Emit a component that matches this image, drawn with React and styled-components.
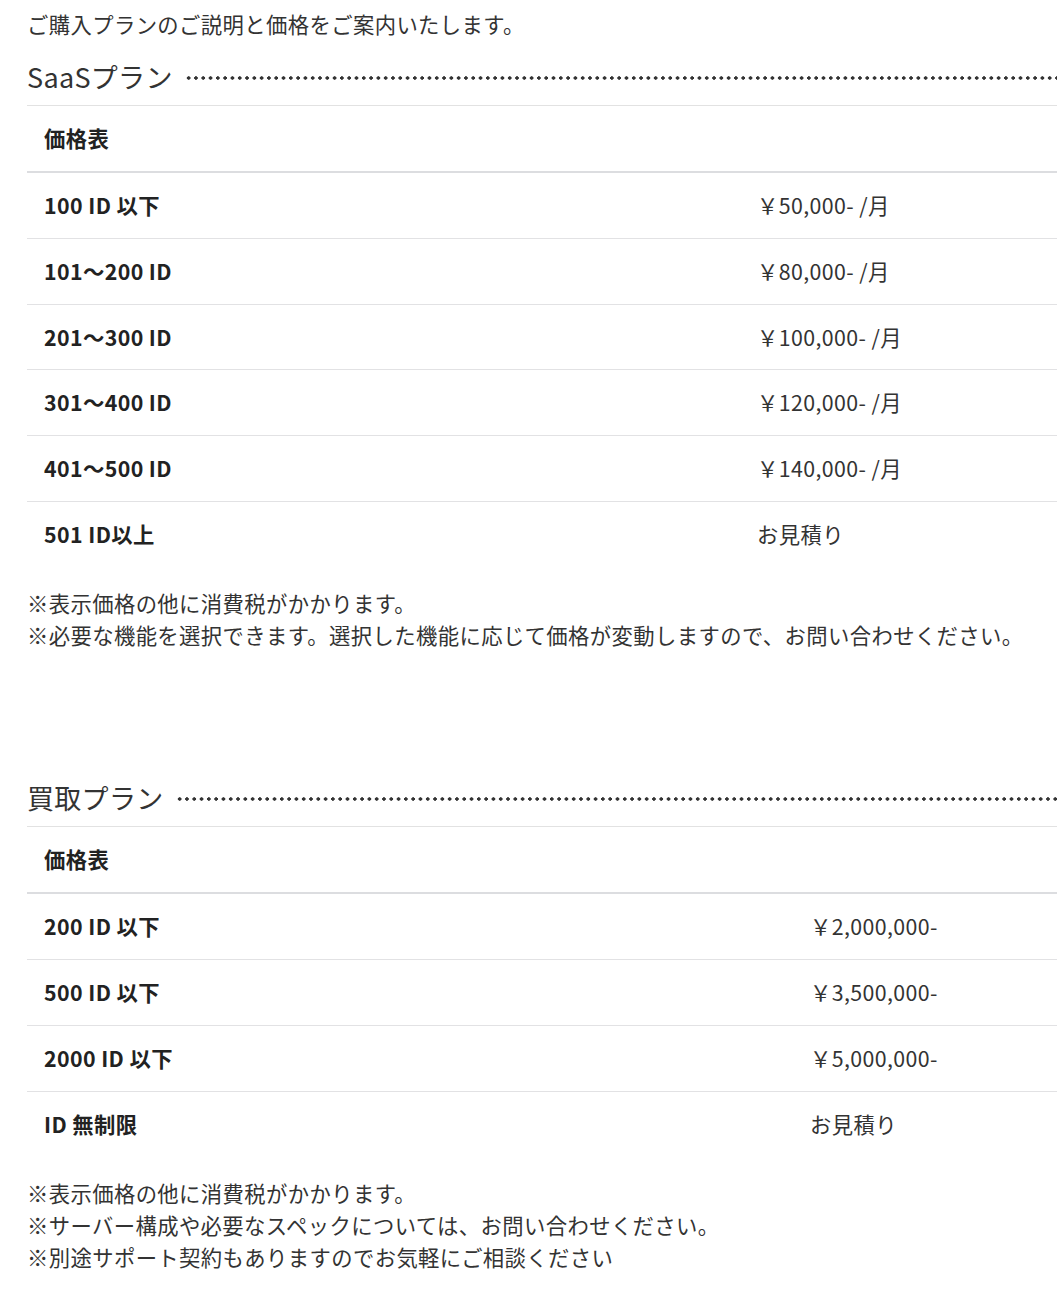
import React from "react";
import styled, { createGlobalStyle } from "styled-components";

const Global = createGlobalStyle`
  html, body { margin: 0; padding: 0; background: #fff; overflow: hidden; }
  body {
    font-family: "Noto Sans CJK JP", "Noto Sans", sans-serif;
    color: #333;
    letter-spacing: 0.4px;
  }
`;

const Page = styled.div`
  padding: 8px 0 40px 27px;
`;

const Lead = styled.p`
  margin: 0;
  font-size: 21.33px;
  line-height: 32px;
`;

const Section = styled.section`
  margin-top: ${(p) => p.$top}px;
`;

const Heading = styled.h2`
  display: flex;
  align-items: center;
  gap: 12px;
  margin: 0 0 8px;
  font-size: 27px;
  font-weight: 400;
  line-height: 40px;
  letter-spacing: 0.3px;
  color: #333;
  &::after {
    content: "";
    flex: 1;
    height: 4px;
    margin-top: 2px;
    background-image: radial-gradient(circle, #333 1.5px, transparent 1.9px);
    background-size: 7.3px 4px;
    background-repeat: repeat-x;
  }
`;

const Table = styled.table`
  width: 100%;
  border-collapse: collapse;
  font-size: 21.33px;
  line-height: 32px;
`;

const HeadCell = styled.th`
  text-align: left;
  font-weight: 700;
  padding: 16px 17px 17px;
  border-top: 1px solid #e2e2e2;
  border-bottom: 2px solid #dcdde0;
  color: #222;
`;

const Row = styled.tr`
  border-bottom: 1px solid #e2e2e4;
  &:last-child { border-bottom: none; }
`;

const Label = styled.td`
  width: ${(p) => p.$w}px;
  padding: 16px 17px 16.8px;
  font-weight: 700;
  color: #222;
`;

const Price = styled.td`
  padding: 16px 17px 16.8px;
  color: #333;
  white-space: nowrap;
`;

const Notes = styled.div`
  margin-top: 20px;
  font-size: 21.33px;
  line-height: 32.3px;
`;

const saas = [
  ["100 ID 以下", "￥50,000- /月"],
  ["101～200 ID", "￥80,000- /月"],
  ["201～300 ID", "￥100,000- /月"],
  ["301～400 ID", "￥120,000- /月"],
  ["401～500 ID", "￥140,000- /月"],
  ["501 ID以上", "お見積り"],
];

const buy = [
  ["200 ID 以下", "￥2,000,000-"],
  ["500 ID 以下", "￥3,500,000-"],
  ["2000 ID 以下", "￥5,000,000-"],
  ["ID 無制限", "お見積り"],
];

function PriceTable({ rows, labelWidth }) {
  return (
    <Table>
      <thead>
        <tr>
          <HeadCell colSpan={2}>価格表</HeadCell>
        </tr>
      </thead>
      <tbody>
        {rows.map(([l, v]) => (
          <Row key={l}>
            <Label $w={labelWidth}>{l}</Label>
            <Price>{v}</Price>
          </Row>
        ))}
      </tbody>
    </Table>
  );
}

export default function App() {
  return (
    <>
      <Global />
      <Page>
        <Lead>ご購入プランのご説明と価格をご案内いたします。</Lead>
        <Section $top={17}>
          <Heading>SaaSプラン</Heading>
          <PriceTable rows={saas} labelWidth={679} />
          <Notes>
            <div>※表示価格の他に消費税がかかります。</div>
            <div>※必要な機能を選択できます。選択した機能に応じて価格が変動しますので、お問い合わせください。</div>
          </Notes>
        </Section>
        <Section $top={127}>
          <Heading>買取プラン</Heading>
          <PriceTable rows={buy} labelWidth={732} />
          <Notes>
            <div>※表示価格の他に消費税がかかります。</div>
            <div>※サーバー構成や必要なスペックについては、お問い合わせください。</div>
            <div>※別途サポート契約もありますのでお気軽にご相談ください</div>
          </Notes>
        </Section>
      </Page>
    </>
  );
}
